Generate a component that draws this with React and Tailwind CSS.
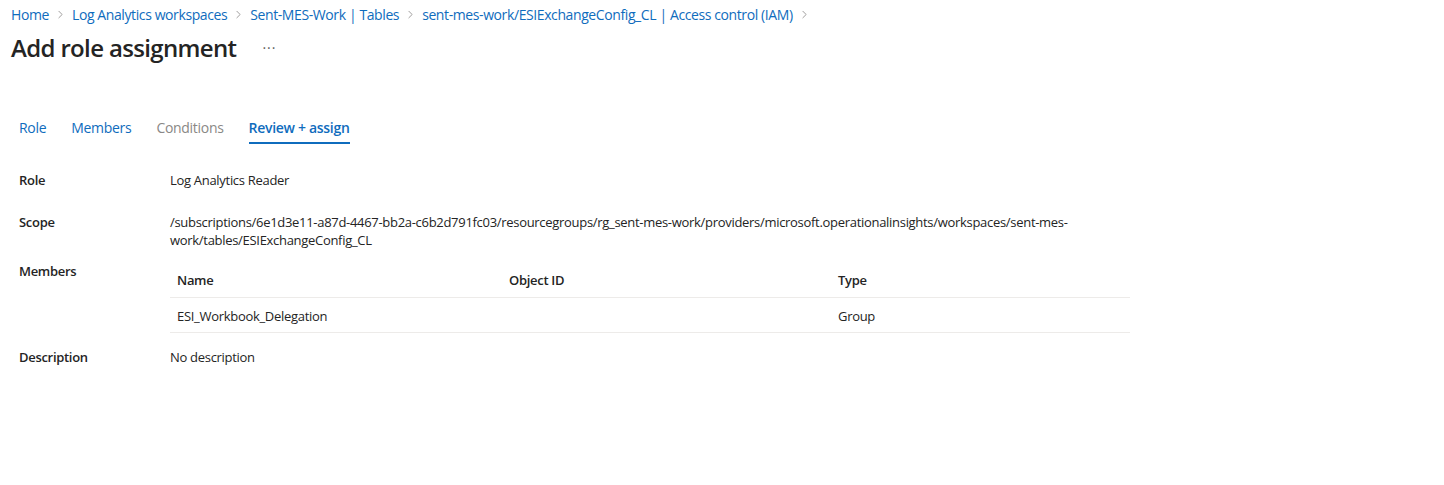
import { ChevronRight } from "lucide-react";

const crumbs = [
  "Home",
  "Log Analytics workspaces",
  "Sent-MES-Work | Tables",
  "sent-mes-work/ESIExchangeConfig_CL | Access control (IAM)",
];

const tabs = [
  { label: "Role", state: "link" },
  { label: "Members", state: "link" },
  { label: "Conditions", state: "disabled" },
  { label: "Review + assign", state: "active" },
];

const font = { fontFamily: '"Open Sans", "Noto Sans", sans-serif' };

const App = () => {
  return (
    <div className="min-h-screen w-full bg-white text-[#242424]" style={font}>
      <nav className="flex items-center h-[29px] pl-[11px] text-[14px] tracking-[-0.4px] text-[#0f6cbd]">
        {crumbs.map((c) => (
          <span key={c} className="flex items-center">
            <span>{c}</span>
            <ChevronRight className="w-[13px] h-[13px] mx-[5px] text-[#8a8886]" strokeWidth={1.5} />
          </span>
        ))}
      </nav>

      <header className="flex items-center pl-[11px] h-[37px]">
        <h1 className="text-[24px] font-semibold tracking-[-0.65px] text-[#242424]">Add role assignment</h1>
        <span className="ml-[26px] text-[14px] text-[#605e5c] tracking-[1px] leading-none pb-[8px]">...</span>
      </header>

      <div className="flex items-end pl-[19px] mt-[48px] h-[30px] text-[14px] tracking-[-0.3px]">
        {tabs.map((t) => (
          <div
            key={t.label}
            className={`mr-[25px] pb-[4px] border-b-2 ${
              t.state === "active"
                ? "border-[#0f6cbd] text-[#0f6cbd] font-semibold"
                : t.state === "disabled"
                ? "border-transparent text-[#8a8886]"
                : "border-transparent text-[#0f6cbd]"
            }`}
          >
            {t.label}
          </div>
        ))}
      </div>

      <div className="pl-[19px] mt-[26px] text-[13px] tracking-[-0.3px]">
        <div className="grid grid-cols-[151px_960px] leading-[18px]">
          <div className="font-semibold pt-[1px]">Role</div>
          <div className="pt-[1px]">Log Analytics Reader</div>

          <div className="font-semibold pt-[24px]">Scope</div>
          <div className="pt-[24px]">
            /subscriptions/6e1d3e11-a87d-4467-bb2a-c6b2d791fc03/resourcegroups/rg_sent-mes-work/providers/microsoft.operationalinsights/workspaces/sent-mes-
            <br />
            work/tables/ESIExchangeConfig_CL
          </div>

          <div className="font-semibold pt-[13px]">Members</div>
          <div className="pt-[13px]">
            <div className="grid grid-cols-[331px_330px_1fr] border-b border-[#edebe9] h-[36px] items-center font-semibold">
              <div className="pl-[7px]">Name</div>
              <div className="pl-[8px]">Object ID</div>
              <div className="pl-[7px]">Type</div>
            </div>
            <div className="grid grid-cols-[331px_330px_1fr] border-b border-[#edebe9] h-[35px] pt-[2px] items-center">
              <div className="pl-[7px]">ESI_Workbook_Delegation</div>
              <div className="pl-[8px]"></div>
              <div className="pl-[7px]">Group</div>
            </div>
          </div>

          <div className="font-semibold pt-[15px]">Description</div>
          <div className="pt-[15px]">No description</div>
        </div>
      </div>
    </div>
  );
};

export default App;
